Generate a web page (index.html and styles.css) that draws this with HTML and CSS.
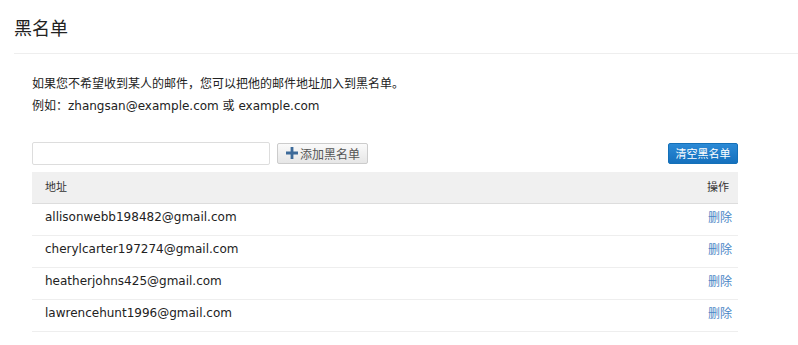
FILE: index.html
```html
<!DOCTYPE html>
<html lang="zh-CN">
<head>
    <meta charset="UTF-8">
    <title>黑名单</title>
    <link rel="stylesheet" href="styles.css">
</head>
<body>
    <div class="page-header">
        <h1>黑名单</h1>
    </div>

    <div class="content">
        <div class="intro">
            <p>如果您不希望收到某人的邮件，您可以把他的邮件地址加入到黑名单。</p>
            <p>例如：zhangsan@example.com 或 example.com</p>
        </div>

        <div class="toolbar">
            <input type="text" class="address-input">
            <button class="add-btn">
                <svg width="12" height="12" viewBox="0 0 12 12"><path d="M4.6 0h2.8v4.6H12v2.8H7.4V12H4.6V7.4H0V4.6h4.6z" fill="#3d6a99"/></svg>
                添加黑名单
            </button>
            <button class="clear-btn">清空黑名单</button>
        </div>

        <table class="blacklist">
            <thead>
                <tr><th>地址</th><th class="op">操作</th></tr>
            </thead>
            <tbody>
                <tr><td>allisonwebb198482@gmail.com</td><td class="op"><a href="#">删除</a></td></tr>
                <tr><td>cherylcarter197274@gmail.com</td><td class="op"><a href="#">删除</a></td></tr>
                <tr><td>heatherjohns425@gmail.com</td><td class="op"><a href="#">删除</a></td></tr>
                <tr><td>lawrencehunt1996@gmail.com</td><td class="op"><a href="#">删除</a></td></tr>
            </tbody>
        </table>
    </div>
</body>
</html>
```

FILE: styles.css
```css
body {
    font-family: "DejaVu Sans", "Noto Sans CJK SC", sans-serif;
    margin: 0;
    padding: 0 0 0 14px;
    background: white;
    color: #222;
    font-size: 12px;
}
.page-header {
    border-bottom: 1px solid #eee;
    padding: 17px 0 12px 0;
}
.page-header h1 {
    margin: 0;
    font-size: 18px;
    font-weight: normal;
    line-height: 24px;
    color: #222;
}
.content {
    padding: 0 60px 0 18px;
}
.intro {
    margin-top: 19px;
}
.intro p {
    margin: 0;
    line-height: 22px;
}
.toolbar {
    display: flex;
    align-items: center;
    margin-top: 24px;
    height: 24px;
}
.address-input {
    width: 238px;
    height: 23px;
    box-sizing: border-box;
    border: 1px solid #ddd;
    border-radius: 2px;
    padding: 2px 4px;
    margin: 0;
}
.add-btn {
    display: flex;
    align-items: center;
    gap: 2px;
    margin-left: 7px;
    height: 21px;
    width: 91px;
    padding: 0 0 0 8px;
    border: 1px solid #ccc;
    border-radius: 2px;
    background: linear-gradient(#fafafa, #e6e6e6);
    font-family: inherit;
    font-size: 12px;
    color: #555;
}
.clear-btn {
    margin-left: auto;
    height: 21px;
    width: 70px;
    padding: 0;
    border: 1px solid #1470b8;
    border-radius: 2px;
    background: linear-gradient(#2b8ad6, #1570bd);
    color: white;
    font-family: inherit;
    font-size: 11px;
}
.blacklist {
    width: 100%;
    border-collapse: collapse;
    margin-top: 7px;
}
.blacklist th {
    background: #f0f0f0;
    font-weight: normal;
    font-size: 11px;
    text-align: left;
    height: 28px;
    padding: 0 13px 3px 13px;
    border-bottom: 1px solid #ddd;
    color: #333;
}
.blacklist td {
    height: 25px;
    padding: 0 13px 6px 13px;
    border-bottom: 1px solid #eee;
    font-size: 12px;
    color: #222;
}
.blacklist th.op {
    padding-right: 9px;
}
.blacklist .op {
    text-align: right;
    padding-right: 6px;
}
.blacklist a {
    color: #4b86c6;
    text-decoration: none;
    font-size: 12px;
}
```
